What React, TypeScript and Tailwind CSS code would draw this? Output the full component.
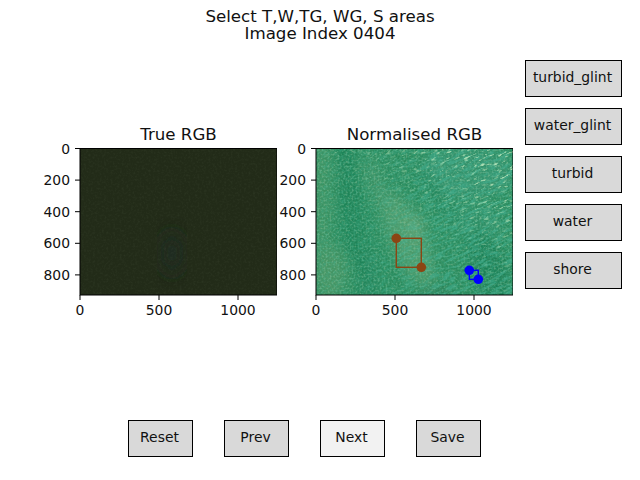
const font = { fontFamily: '"DejaVu Sans", sans-serif' };

function Btn({ label, light }: { label: string; light?: boolean }) {
  return (
    <div className={`flex items-center justify-center border border-black pr-[2px] pb-[2px] text-[13.9px] text-[#111] ${light ? "bg-[#f2f2f2]" : "bg-[#d9d9d9]"} w-[97px] h-[37px]`}>
      {label}
    </div>
  );
}

function SmallBtn({ label, light }: { label: string; light?: boolean }) {
  return (
    <div className={`flex items-center justify-center border border-black pr-[2px] pb-[2px] text-[13.9px] text-[#111] ${light ? "bg-[#f2f2f2]" : "bg-[#d9d9d9]"} w-[65px] h-[37px]`}>
      {label}
    </div>
  );
}

function Plot({ title, children }: { title: string; children: React.ReactNode }) {
  const xs = [0, 500, 1000];
  const ys = [0, 200, 400, 600, 800];
  return (
    <div className="flex flex-col w-[277px]">
      <div className="pl-[80px] pt-[4px] h-[17px]">
        <div className="w-[197px] text-center text-[16.67px] leading-[20px] text-[#111]">{title}</div>
      </div>
      <svg width="277" height="185" viewBox="0 -10 277 185" className="block">
        <svg x="80" y="0" width="197" height="147" viewBox="0 0 197 147">{children}</svg>
        <rect x="80" y="0.5" width="197" height="146.5" fill="none" stroke="#000" strokeWidth="1" />
        {xs.map((v) => {
          const x = 80 + v * 0.158;
          return (
            <g key={v}>
              <line x1={x} x2={x} y1={147} y2={152} stroke="#000" strokeWidth="1" />
              <text x={x} y={167} textAnchor="middle" fontSize="13.9" fill="#111" style={font}>{v}</text>
            </g>
          );
        })}
        {ys.map((v) => {
          const y = 0.5 + v * 0.158;
          return (
            <g key={v}>
              <line x1={75} x2={80} y1={y} y2={y} stroke="#000" strokeWidth="1" />
              <text x={70} y={y + 5} textAnchor="end" fontSize="13.9" fill="#111" style={font}>{v}</text>
            </g>
          );
        })}
      </svg>
    </div>
  );
}

function TrueImage() {
  return (
    <>
      <defs>
        <filter id="tb1" x="-30%" y="-30%" width="160%" height="160%"><feGaussianBlur stdDeviation="9" /></filter>
        <filter id="tn1" x="0" y="0" width="100%" height="100%">
          <feTurbulence type="fractalNoise" baseFrequency="0.45" numOctaves="2" seed="4" />
          <feColorMatrix values="0 0 0 0 0.3  0 0 0 0 0.38  0 0 0 0 0.25  1.6 0 0 0 -0.7" />
        </filter>
      </defs>
      <rect width="197" height="147" fill="#222b18" />
      <g filter="url(#tb1)">
        <ellipse cx="92" cy="105" rx="9" ry="22" fill="#1e2a20" />
      </g>
      <rect width="197" height="147" filter="url(#tn1)" opacity="0.1" />
    </>
  );
}

function NormImage() {
  return (
    <>
      <defs>
        <filter id="nb1" x="-40%" y="-40%" width="180%" height="180%"><feGaussianBlur stdDeviation="6" /></filter>
        <filter id="nm1" x="0" y="0" width="100%" height="100%">
          <feTurbulence type="fractalNoise" baseFrequency="0.5" numOctaves="1" seed="11" />
          <feColorMatrix values="0 0 0 0 0.4  0 0 0 0 0.68  0 0 0 0 0.45  3 0 0 0 -1.3" />
        </filter>
        <filter id="nd1" x="0" y="0" width="100%" height="100%">
          <feTurbulence type="fractalNoise" baseFrequency="0.5" numOctaves="1" seed="3" />
          <feColorMatrix values="0 0 0 0 0.06  0 0 0 0 0.45  0 0 0 0 0.28  3 0 0 0 -1.3" />
        </filter>
        <filter id="nw1" x="0" y="0" width="100%" height="100%">
          <feTurbulence type="fractalNoise" baseFrequency="0.08 0.4" numOctaves="2" seed="21" />
          <feColorMatrix values="0 0 0 0 0.06  0 0 0 0 0.44  0 0 0 0 0.29  5 0 0 0 -2.3" />
        </filter>
        <filter id="nn1" x="0" y="0" width="100%" height="100%">
          <feTurbulence type="fractalNoise" baseFrequency="0.16 0.55" numOctaves="2" seed="7" />
          <feColorMatrix values="0 0 0 0 0.5  0 0 0 0 0.8  0 0 0 0 0.5  6 0 0 0 -3.4" />
        </filter>
        <linearGradient id="ng1" x1="0" y1="1" x2="1" y2="0">
          <stop offset="0.4" stopColor="#000" />
          <stop offset="0.65" stopColor="#666" />
          <stop offset="0.95" stopColor="#fff" />
        </linearGradient>
        <linearGradient id="ng2" x1="0" y1="0.5" x2="1" y2="0.5">
          <stop offset="0.2" stopColor="#333" />
          <stop offset="0.65" stopColor="#ccc" />
        </linearGradient>
        <mask id="nk1" maskUnits="userSpaceOnUse" x="0" y="0" width="197" height="147">
          <rect width="197" height="147" fill="url(#ng1)" />
        </mask>
        <mask id="nk2" maskUnits="userSpaceOnUse" x="0" y="0" width="197" height="147">
          <rect width="197" height="147" fill="url(#ng2)" />
        </mask>
      </defs>
      <rect width="197" height="147" fill="#2a8b5d" />
      <g filter="url(#nb1)">
        <ellipse cx="5" cy="50" rx="11" ry="70" fill="#3e9362" />
        <ellipse cx="34" cy="50" rx="10" ry="75" fill="#1d8356" transform="rotate(-6 34 50)" />
        <ellipse cx="14" cy="125" rx="17" ry="28" fill="#459464" />
        <ellipse cx="52" cy="130" rx="8" ry="30" fill="#21845a" />
        <ellipse cx="62" cy="40" rx="7" ry="32" fill="#3f9365" transform="rotate(-20 62 40)" />
        <ellipse cx="92" cy="92" rx="18" ry="50" fill="#4c9a6a" transform="rotate(-24 92 92)" />
        <ellipse cx="100" cy="80" rx="7" ry="14" fill="#60a273" />
        <ellipse cx="150" cy="25" rx="50" ry="26" fill="#30916a" />
        <ellipse cx="160" cy="75" rx="30" ry="16" fill="#2f8f66" />
        <ellipse cx="172" cy="118" rx="17" ry="38" fill="#1a8156" transform="rotate(-22 172 118)" />
        <ellipse cx="122" cy="50" rx="7" ry="36" fill="#23865c" transform="rotate(-38 122 50)" />
        <ellipse cx="120" cy="145" rx="18" ry="5" fill="#2c7e56" />
      </g>
      <rect width="197" height="147" filter="url(#nm1)" opacity="0.35" />
      <rect width="197" height="147" filter="url(#nd1)" opacity="0.4" />
      <g mask="url(#nk2)">
        <g transform="rotate(-24 98 73)">
          <rect x="-60" y="-60" width="320" height="270" filter="url(#nw1)" opacity="0.7" />
        </g>
      </g>
      <g mask="url(#nk1)">
        <g transform="rotate(-24 98 73)">
          <rect x="-60" y="-60" width="320" height="270" filter="url(#nn1)" />
        </g>
      </g>
      <g fill="none" strokeWidth="1.4">
        <rect x="80.3" y="90.3" width="25" height="29" stroke="#8b4513" />
        <rect x="153.3" y="122.3" width="9" height="9" stroke="#0000ff" />
      </g>
      <circle cx="80.3" cy="90.3" r="4.8" fill="#8b4513" />
      <circle cx="105.3" cy="119.3" r="4.8" fill="#8b4513" />
      <circle cx="153.3" cy="122.3" r="4.8" fill="#0000ff" />
      <circle cx="162.3" cy="131.3" r="4.8" fill="#0000ff" />
    </>
  );
}

export default function App() {
  return (
    <div className="w-[640px] h-[480px] bg-white flex flex-col overflow-hidden" style={font}>
      <div className="h-[60px] pt-[8px] text-center text-[16.67px] leading-[17px] text-[#111]">
        <div>Select T,W,TG, WG, S areas</div>
        <div>Image Index 0404</div>
      </div>
      <div className="flex h-[360px]">
        <div className="flex pt-[61px] w-[525px]">
          <Plot title="True RGB"><TrueImage /></Plot>
          <div className="-ml-[41px]">
            <Plot title="Normalised RGB"><NormImage /></Plot>
          </div>
        </div>
        <div className="flex flex-col gap-[11px]">
          <Btn label="turbid_glint" />
          <Btn label="water_glint" />
          <Btn label="turbid" />
          <Btn label="water" />
          <Btn label="shore" />
        </div>
      </div>
      <div className="flex pl-[128px] gap-[31px]">
        <SmallBtn label="Reset" />
        <SmallBtn label="Prev" />
        <SmallBtn label="Next" light />
        <SmallBtn label="Save" />
      </div>
    </div>
  );
}
